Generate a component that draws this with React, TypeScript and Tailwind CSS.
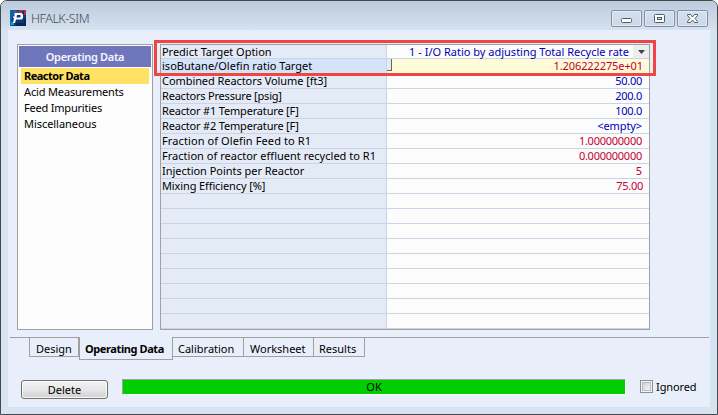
import type { ReactNode } from "react";

type Row = { label: string; value: string; lt: string; vt: string; tone: string };

const blue = "text-[#0000b4]";
const red = "text-[#c00032]";

const rows: Row[] = [
  { label: "Predict Target Option", value: "1 - I/O Ratio by adjusting Total Recycle rate", lt: "tracking-[-0.03px]", vt: "", tone: blue },
  { label: "isoButane/Olefin ratio Target", value: "1.206222275e+01", lt: "tracking-[0.03px]", vt: "tracking-[-0.1px]", tone: red },
  { label: "Combined Reactors Volume [ft3]", value: "50.00", lt: "tracking-[-0.07px]", vt: "tracking-[-0.25px] mr-px", tone: blue },
  { label: "Reactors Pressure [psig]", value: "200.0", lt: "tracking-[-0.2px]", vt: "tracking-[-0.25px] mr-px", tone: blue },
  { label: "Reactor #1 Temperature [F]", value: "100.0", lt: "tracking-[-0.18px]", vt: "tracking-[-0.25px] mr-px", tone: blue },
  { label: "Reactor #2 Temperature [F]", value: "<empty>", lt: "tracking-[-0.18px]", vt: "tracking-[-0.1px] mr-px", tone: blue },
  { label: "Fraction of Olefin Feed to R1", value: "1.000000000", lt: "tracking-[0.1px]", vt: "tracking-[-0.25px] mr-px", tone: red },
  { label: "Fraction of reactor effluent recycled to R1", value: "0.000000000", lt: "tracking-[0.02px]", vt: "tracking-[-0.25px] mr-px", tone: red },
  { label: "Injection Points per Reactor", value: "5", lt: "tracking-[-0.03px]", vt: "mr-px", tone: red },
  { label: "Mixing Efficiency [%]", value: "75.00", lt: "tracking-[-0.12px]", vt: "tracking-[-0.25px]", tone: red },
  ...Array.from({ length: 9 }, () => ({ label: "", value: "", lt: "", vt: "", tone: blue })),
];

function CaptionButton({ children }: { children: ReactNode }) {
  return (
    <div className="flex h-[17px] w-[31px] items-center justify-center rounded-[2px] border border-[#8190a6] bg-gradient-to-b from-[#d5e0ec] to-[#c9d7e7] shadow-[inset_0_0_0_1px_#e2eaf3]">
      {children}
    </div>
  );
}

function TitleBar() {
  return (
    <header className="flex h-[29px] shrink-0 items-start bg-gradient-to-b from-[#bccbdc] to-[#d5e2ef] pl-[9px] pr-[9px]">
      <svg width="16" height="16" viewBox="0 0 16 16" className="mt-[9px]">
        <rect width="16" height="16" fill="#0b3a7c" />
        <path d="M0 0h7L2 8v8H0z" fill="#0865ac" />
        <path d="M9 0h7v5h-2V1H9z" fill="#c0253c" />
        <path d="M1 12h3v3H1z" fill="#149bcc" />
        <path d="M6 13h8V9h2v7H6z" fill="#08264f" />
        <path d="M4.5 3h7L13 4.500v3.500L11.500 9.500H6L5 13H3l1-5H3V6.500h1.500z" fill="#fff" />
        <path d="M7 5h3.500v2.500h-4z" fill="#0b3a7c" />
        <path d="M5 2h7" stroke="#d94756" strokeWidth="1" />
      </svg>
      <h1 className="ml-[5px] mt-[9px] text-[12.500px] font-light leading-[18px] tracking-[-0.450px] text-[#3f4955]">HFALK-SIM</h1>
      <div className="ml-auto mt-[9px] flex gap-[2px]">
        <CaptionButton>
          <svg width="11" height="5" viewBox="0 0 11 5" className="mt-[3px]"><rect x=".5" y=".5" width="10" height="4" rx="1" fill="#fff" stroke="#505a69" /></svg>
        </CaptionButton>
        <CaptionButton>
          <svg width="11" height="9" viewBox="0 0 11 9"><rect x=".5" y=".5" width="10" height="8" rx="1" fill="#fff" stroke="#505a69" /><rect x="3.5" y="3.5" width="4" height="2" fill="#d2deeb" stroke="#505a69" /></svg>
        </CaptionButton>
        <CaptionButton>
          <svg width="11" height="9" viewBox="0 0 11 9"><path d="M.5.5h3L5.5 3l2-2.5h3v1L8 4.500l2.500 3v1h-3l-2-2.500-2 2.500h-3v-1l2.500-3-2.500-3z" fill="#fff" stroke="#505a69" /></svg>
        </CaptionButton>
      </div>
    </header>
  );
}

function Sidebar() {
  return (
    <aside className="flex h-[286px] w-[136px] flex-col border border-[#a0a0a0] bg-[#fcfcfc] p-px text-[11px] leading-[16px]">
      <div className="h-[21px] bg-[#7076bc] pt-[3px] text-center font-semibold text-[#f4f6ff]"><span className="tracking-[-0.3px]">Operating Data</span></div>
      <div className="mx-[2px] mt-px h-[16px] bg-[#ffe264] pl-[3px] font-bold"><span className="tracking-[-0.5px]">Reactor Data</span></div>
      <div className="h-[16px] pl-[5px]"><span className="tracking-[-0.150px]">Acid Measurements</span></div>
      <div className="h-[16px] pl-[5px]"><span className="tracking-[-0.2px]">Feed Impurities</span></div>
      <div className="h-[16px] pl-[5px]"><span className="tracking-[-0.050px]">Miscellaneous</span></div>
    </aside>
  );
}

function PropertyTable() {
  return (
    <main className="relative ml-[7px] h-[286px] w-[490px] border border-[#a0a0a0] bg-white">
      {rows.map((row, i) => (
        <div key={i} className={`flex ${i === 0 ? "h-[14px] leading-[13px]" : "h-[15px] leading-[14px]"}`}>
          <div className={`w-[226px] shrink-0 border-b border-r border-[#cbd4e5] pl-px text-[11px] whitespace-nowrap ${i === 1 ? "bg-[#d3e4fa]" : "bg-[#e4ebf6]"}`}>
            <span className={row.lt}>{row.label}</span>
          </div>
          <div className={`flex flex-1 justify-end border-b border-[#cbd4e5] text-[11px] whitespace-nowrap ${row.tone} ${i === 1 ? "bg-[#fffbd7]" : "bg-[#fcfcfc]"} ${i === 0 ? "pr-0" : "pr-[6px]"}`}>
            {i === 1 && <i className="mr-auto h-[12px] w-[5px] border-b border-r border-[#646464] bg-[#e4ebf6]" />}
            <span className={row.vt}>{row.value}</span>
            {i === 0 && (
              <span className="ml-[4px] flex w-[16px] items-center justify-center bg-[#eeeeee]">
                <svg width="7" height="4" viewBox="0 0 7 4"><path d="M0 0h7L3.5 4z" fill="#424242" /></svg>
              </span>
            )}
          </div>
        </div>
      ))}
      <div className="absolute -left-[7px] -top-[5px] h-[36px] w-[502px] border-[3px] border-[#ee4640]" />
    </main>
  );
}

function Tabs() {
  const tab = "flex h-[20px] items-center border-b border-r border-t border-[#a0a0a0] pt-[3px]";
  return (
    <nav className="mt-[7px] flex h-[23px] text-[11px] leading-[16px] whitespace-nowrap">
      <div className="ml-[2px] w-[19px] border-t border-[#a0a0a0]" />
      <div className={`${tab} w-[50px] border-l pl-[6px]`}><span>Design</span></div>
      <div className="flex h-[23px] w-[94px] border-x border-b border-[#a0a0a0] pl-[5px] pt-[4px] font-bold"><span className="tracking-[-0.400px]">Operating Data</span></div>
      <div className={`${tab} w-[71px] pl-[5px]`}><span>Calibration</span></div>
      <div className={`${tab} w-[70px] pl-[6px]`}><span>Worksheet</span></div>
      <div className={`${tab} w-[51px] pl-[5px]`}><span>Results</span></div>
      <div className="mr-px flex-1 border-t border-[#a0a0a0]" />
    </nav>
  );
}

function Footer() {
  return (
    <footer className="mt-[19px] flex items-start pl-[13px] text-[11px] leading-[14px]">
      <button className="mt-px h-[19px] w-[87px] rounded-[3px] border border-[#707070] bg-gradient-to-b from-[#f2f2f2] via-[#e7e7e7] to-[#d0d0d0] shadow-[inset_0_0_0_1px_#fafafa]"><span>Delete</span></button>
      <div className="ml-[14px] h-[16px] w-[504px] border border-b-white border-l-[#a0a0a0] border-r-white border-t-[#a0a0a0] bg-[#00ce00] text-center"><span>OK</span></div>
      <div className="ml-[14px] mt-px flex size-[13px] items-center justify-center border border-[#8e8f8f] bg-[#f4f4f4]"><i className="size-[9px] border border-[#b4bbc4] bg-gradient-to-br from-[#cbcfd5] to-[#f6f6f6]" /></div>
      <span className="ml-[3px] mt-px tracking-[-0.1px]">Ignored</span>
    </footer>
  );
}

export default function App() {
  return (
    <div className="h-[415px] w-[718px] overflow-hidden bg-white font-['Noto_Sans',sans-serif] text-black">
      <div className="flex h-full w-full flex-col overflow-hidden rounded-t-[7px] border border-[#45484d] bg-[#d6e4f1]">
        <TitleBar />
        <div className="ml-[7px] h-[377px] w-[702px] bg-[#e8effa] pt-[14px]">
          <div className="flex pl-[9px]"><Sidebar /><PropertyTable /></div>
          <Tabs />
          <Footer />
        </div>
      </div>
    </div>
  );
}
